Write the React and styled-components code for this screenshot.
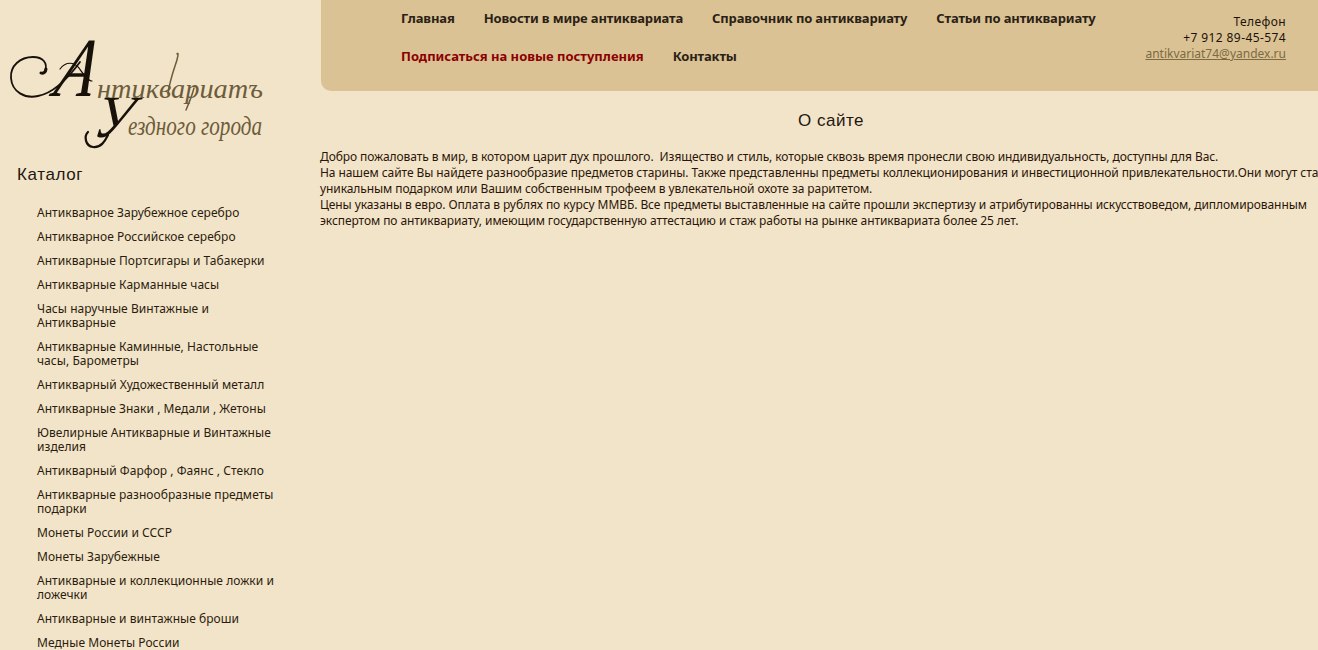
import React from "react";
import styled, { createGlobalStyle } from "styled-components";

const Global = createGlobalStyle`
  html, body {
    margin: 0;
    height: 650px;
    overflow: hidden;
    background: #f2e4c9;
  }
  a { text-decoration: none; color: inherit; }
`;

const Page = styled.div`
  display: flex;
  align-items: flex-start;
  width: 1342px;
  height: 650px;
  overflow: hidden;
  font-family: "Noto Sans", "DejaVu Sans", sans-serif;
  font-size: 12px;
  color: #2b1c0e;
`;

const Sidebar = styled.aside`
  flex: 0 0 320px;
  width: 320px;
`;

const LogoLink = styled.a`
  display: block;
  height: 165px;
`;

const LogoSvg = styled.svg`
  display: block;
`;

const SideTitle = styled.h2`
  margin: 0 0 21px 17px;
  font: 400 17px/20px "Liberation Sans", Arial, sans-serif;
  letter-spacing: 0.6px;
  color: #1f1710;
`;

const CatalogList = styled.ul`
  list-style: none;
  margin: 0;
  padding: 0 0 0 37px;
  width: 238px;
  display: flex;
  flex-direction: column;
  gap: 10px;
  letter-spacing: 0.05px;
`;

const CatalogItem = styled.li`
  line-height: 14px;
`;

const Main = styled.main`
  flex: 0 0 1022px;
  width: 1022px;
`;

const Header = styled.header`
  display: flex;
  justify-content: space-between;
  height: 91px;
  margin-left: 1px;
  padding: 0 56px 0 80px;
  box-sizing: border-box;
  background: #dac295;
  border-bottom-left-radius: 10px;
`;

const Nav = styled.nav`
  display: flex;
  flex-wrap: wrap;
  align-content: flex-start;
  column-gap: 29px;
  width: 720px;
  margin-top: -1px;
`;

const NavLink = styled.a`
  font: 700 13px/38px "Noto Sans", "DejaVu Sans", sans-serif;
  letter-spacing: ${(p) => (p.$accent ? "0" : "-0.15px")};
  color: ${(p) => (p.$accent ? "#8b0000" : "#2a2114")};
`;

const Contacts = styled.div`
  padding-top: 14px;
  text-align: right;
  line-height: 16px;
  letter-spacing: 0.4px;
  color: #1c1208;
`;

const Email = styled.a`
  display: block;
  letter-spacing: 0;
  color: #7d6a42;
  text-decoration: underline;
`;

const Title = styled.h1`
  margin: 21px 0 19px;
  text-align: center;
  font: 400 17px/18px "Liberation Sans", Arial, sans-serif;
  letter-spacing: 0.5px;
  color: #1f1710;
`;

const Intro = styled.p`
  margin: 0;
  line-height: 16px;
  white-space: pre;
  letter-spacing: -0.08px;
  color: #2b1508;
`;

const catalog = [
  "Антикварное Зарубежное серебро",
  "Антикварное Российское серебро",
  "Антикварные Портсигары и Табакерки",
  "Антикварные Карманные часы",
  "Часы наручные Винтажные и Антикварные",
  "Антикварные Каминные, Настольные часы, Барометры",
  "Антикварный Художественный металл",
  "Антикварные Знаки , Медали , Жетоны",
  "Ювелирные Антикварные и Винтажные изделия",
  "Антикварный Фарфор , Фаянс , Стекло",
  "Антикварные разнообразные предметы подарки",
  "Монеты России и СССР",
  "Монеты Зарубежные",
  "Антикварные и коллекционные ложки и ложечки",
  "Антикварные и винтажные броши",
  "Медные Монеты России",
];

const navLinks = [
  { label: "Главная" },
  { label: "Новости в мире антиквариата" },
  { label: "Справочник по антиквариату" },
  { label: "Статьи по антиквариату" },
  { label: "Подписаться на новые поступления", accent: true },
  { label: "Контакты" },
];

const intro = [
  "Добро пожаловать в мир, в котором царит дух прошлого.  Изящество и стиль, которые сквозь время пронесли свою индивидуальность, доступны для Вас.",
  "На нашем сайте Вы найдете разнообразие предметов старины. Также представленны предметы коллекционирования и инвестиционной привлекательности.Они могут стать",
  "уникальным подарком или Вашим собственным трофеем в увлекательной охоте за раритетом.",
  "Цены указаны в евро. Оплата в рублях по курсу ММВБ. Все предметы выставленные на сайте прошли экспертизу и атрибутированны искусствоведом, дипломированным",
  "экспертом по антиквариату, имеющим государственную аттестацию и стаж работы на рынке антиквариата более 25 лет.",
];

// logo: real text in the closest italic we have, the swashes are drawn
const Logo = () => (
  <LogoSvg width="300" height="165" viewBox="0 0 300 165" aria-label="Антиквариатъ Уездного города">
    <g fill="none" stroke="#17110a" strokeLinecap="round">
      <path d="M45 71c3-8-2-14-12-14C20 57 10 66 11 78c1 14 14 21 27 18 16-3 31-19 42-34" strokeWidth="1.8" />
      <path d="M46 69c0 3-3 5-5 4" strokeWidth="3" />
      <path d="M60 69c6-8 14-7 19-1 5 7 9 13 13 13" strokeWidth="1.2" />
      <path d="M88 132c-4 4-3 14 5 15 8 1 12-6 15-12" strokeWidth="2.2" />
    </g>
    <g fill="none" stroke="#6d5c3b" strokeLinecap="round" strokeWidth="1.5">
      <path d="M177 54c2-3 1 4-2 12-3 9-6 20-7 28" />
      <path d="M194 88c-2 8-5 15-8 22" />
    </g>
    <g fontFamily="'Liberation Serif', serif" fontStyle="italic">
      <text transform="translate(52 96) skewX(-16)" fontSize="84" fill="#17110a" textLength="38" lengthAdjust="spacingAndGlyphs">А</text>
      <text transform="translate(92 137) skewX(-10)" fontSize="60" fill="#17110a" textLength="38" lengthAdjust="spacingAndGlyphs">У</text>
      <text x="97" y="98" fontSize="27" fill="#6d5c3b" textLength="166" lengthAdjust="spacingAndGlyphs">нтиквариатъ</text>
      <text x="128" y="135" fontSize="27" fill="#6d5c3b" textLength="134" lengthAdjust="spacingAndGlyphs">ездного города</text>
    </g>
  </LogoSvg>
);

export default function App() {
  return (
    <Page>
      <Global />
      <Sidebar>
        <LogoLink href="#">
          <Logo />
        </LogoLink>
        <SideTitle>Каталог</SideTitle>
        <CatalogList>
          {catalog.map((name) => (
            <CatalogItem key={name}>
              <a href="#">{name}</a>
            </CatalogItem>
          ))}
        </CatalogList>
      </Sidebar>
      <Main>
        <Header>
          <Nav>
            {navLinks.map((link) => (
              <NavLink key={link.label} href="#" $accent={link.accent}>
                {link.label}
              </NavLink>
            ))}
          </Nav>
          <Contacts>
            <div>Телефон</div>
            <div>+7 912 89-45-574</div>
            <Email href="#">antikvariat74@yandex.ru</Email>
          </Contacts>
        </Header>
        <Title>О сайте</Title>
        {intro.map((line) => (
          <Intro key={line}>{line}</Intro>
        ))}
      </Main>
    </Page>
  );
}
